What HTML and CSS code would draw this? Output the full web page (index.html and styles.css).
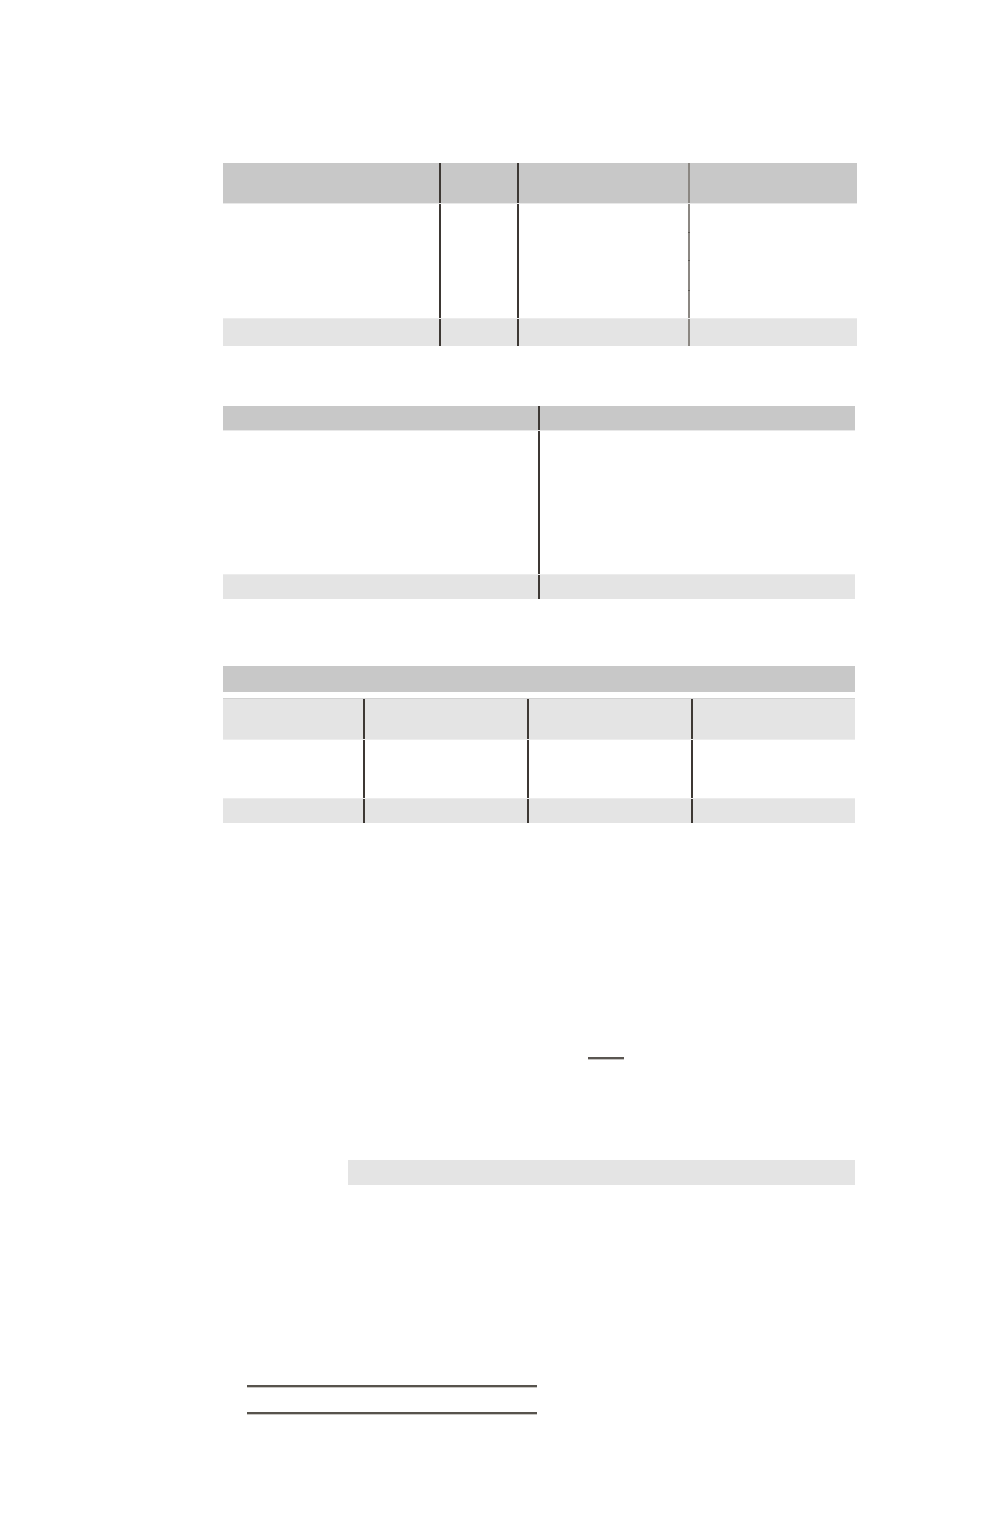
FILE: index.html
```html
<!DOCTYPE html>
<html lang="en">
<head>
<meta charset="utf-8">
<title>Form</title>
<link rel="stylesheet" href="styles.css">
</head>
<body>
<main class="page">
  <section class="tbl tbl-one">
    <div class="row head h41"><div class="c"></div><div class="c dk"></div><div class="c dk"></div><div class="c gr"></div></div>
    <div class="row h28"><div class="c"></div><div class="c dk"></div><div class="c dk"></div><div class="c gr"></div></div>
    <div class="row h28"><div class="c"></div><div class="c dk"></div><div class="c dk"></div><div class="c gr tick"></div></div>
    <div class="row h30"><div class="c"></div><div class="c dk"></div><div class="c dk"></div><div class="c gr tick"></div></div>
    <div class="row h28"><div class="c"></div><div class="c dk"></div><div class="c dk"></div><div class="c gr tick"></div></div>
    <div class="row foot h28"><div class="c"></div><div class="c dk"></div><div class="c dk"></div><div class="c gr"></div></div>
  </section>

  <section class="tbl tbl-two">
    <div class="row head h25"><div class="c"></div><div class="c dk"></div></div>
    <div class="row h29"><div class="c"></div><div class="c dk"></div></div>
    <div class="row h28"><div class="c"></div><div class="c dk"></div></div>
    <div class="row h29"><div class="c"></div><div class="c dk"></div></div>
    <div class="row h29"><div class="c"></div><div class="c dk"></div></div>
    <div class="row h28"><div class="c"></div><div class="c dk"></div></div>
    <div class="row foot h25"><div class="c"></div><div class="c dk"></div></div>
  </section>

  <section class="tbl tbl-three">
    <div class="bar-head"></div>
    <div class="row sub h42"><div class="c"></div><div class="c dk"></div><div class="c dk"></div><div class="c dk"></div></div>
    <div class="row h30"><div class="c"></div><div class="c dk"></div><div class="c dk"></div><div class="c dk"></div></div>
    <div class="row h28"><div class="c"></div><div class="c dk"></div><div class="c dk"></div><div class="c dk"></div></div>
    <div class="row foot h25"><div class="c"></div><div class="c dk"></div><div class="c dk"></div><div class="c dk"></div></div>
  </section>

  <div class="blank-underline"></div>

  <div class="grey-field"></div>

  <div class="sign-lines">
    <div class="sign-line"></div>
    <div class="sign-line"></div>
  </div>
</main>
</body>
</html>
```

FILE: styles.css
```css
html, body {
  margin: 0;
  padding: 0;
  background: #ffffff;
  font-family: "Liberation Sans", Arial, sans-serif;
}

.page {
  width: 634px;
  margin-left: 223px;
  padding-top: 163px;
  padding-bottom: 80px;
}

.tbl {
  display: flex;
  flex-direction: column;
}

.row {
  display: grid;
  box-sizing: border-box;
}

.c {
  box-sizing: border-box;
  position: relative;
}

.dk {
  border-left: 2px solid #3d3834;
}

.gr {
  border-left: 2px solid #8b8782;
}

.tick::before {
  content: "";
  position: absolute;
  left: -2px;
  top: 0;
  width: 2px;
  height: 1px;
  background: #5e5a55;
}

.head {
  background: #c8c8c8;
  border-bottom: 1px solid #e8e8e8;
}

.foot {
  background: #e4e4e4;
  border-top: 1px solid #ececec;
}

.sub {
  background: #e4e4e4;
  border-top: 1px solid #d2d2d2;
  border-bottom: 1px solid #ededed;
}

.h25 { height: 25px; }
.h28 { height: 28px; }
.h29 { height: 29px; }
.h30 { height: 30px; }
.h41 { height: 41px; }
.h42 { height: 42px; }

.tbl-one .row {
  grid-template-columns: 216px 78px 171px 169px;
}

.tbl-two {
  margin-top: 60px;
  width: 632px;
}

.tbl-two .row {
  grid-template-columns: 315px 317px;
}

.tbl-three {
  margin-top: 67px;
  width: 632px;
}

.bar-head {
  height: 26px;
  background: #c8c8c8;
  margin-bottom: 6px;
}

.tbl-three .row {
  grid-template-columns: 140px 164px 164px 164px;
}

.blank-underline {
  margin-top: 234px;
  margin-left: 365px;
  width: 36px;
  height: 0;
  border-top: 2px solid #5a5651;
  border-bottom: 1px solid #c4c2c0;
}

.grey-field {
  margin-top: 100px;
  margin-left: 125px;
  width: 507px;
  height: 25px;
  background: #e4e4e4;
}

.sign-lines {
  margin-top: 200px;
  margin-left: 24px;
  width: 290px;
  display: flex;
  flex-direction: column;
  gap: 24px;
}

.sign-line {
  height: 0;
  border-top: 2px solid #57534d;
  border-bottom: 1px solid #c8c6c3;
}
```
